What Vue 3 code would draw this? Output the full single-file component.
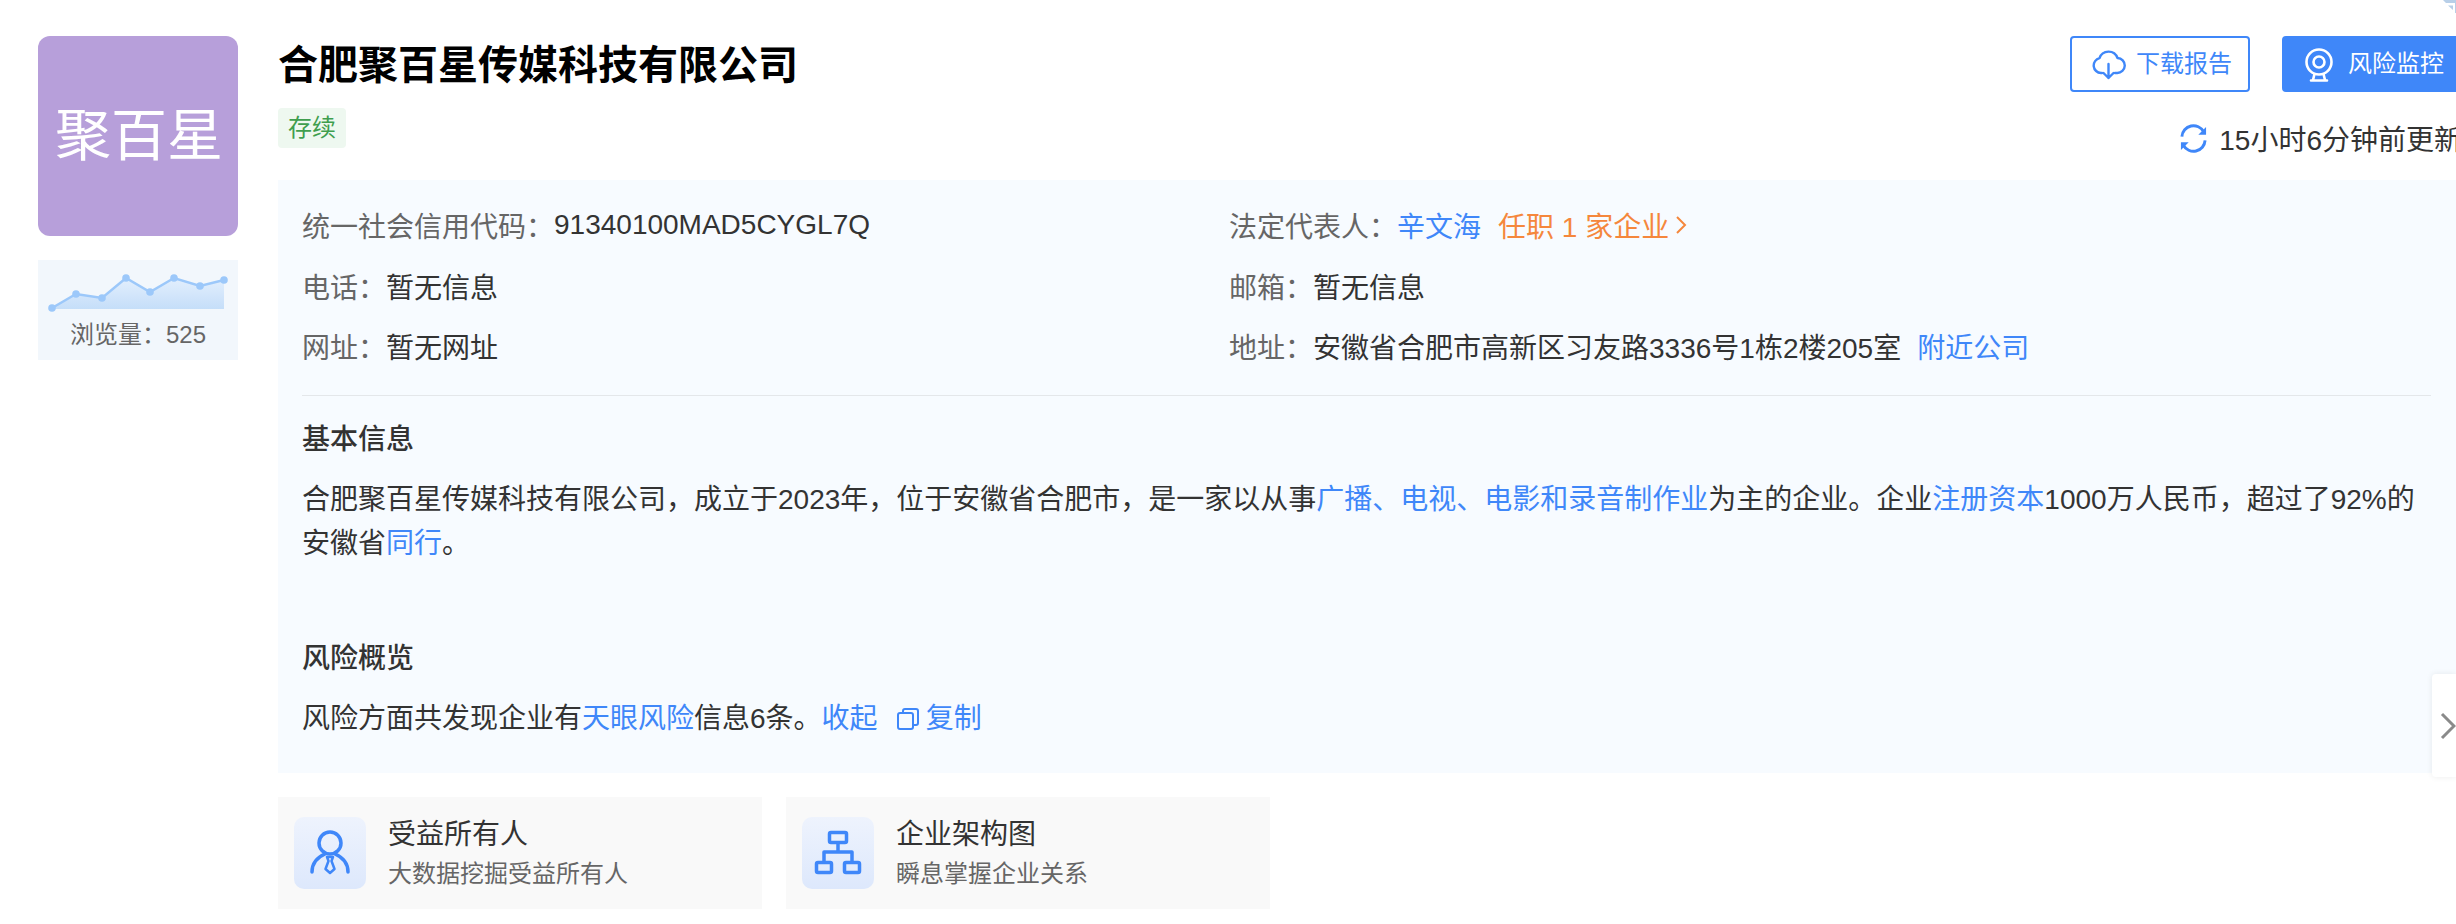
<template>
  <div class="page">
    <aside class="side">
      <div class="logo">聚百星</div>
      <div class="views">
        <svg class="spark" width="200" height="60" viewBox="0 0 200 60">
          <defs>
            <linearGradient id="sparkFill" x1="0" y1="0" x2="0" y2="1">
              <stop offset="0" stop-color="#e3effd" />
              <stop offset="1" stop-color="#c5def9" />
            </linearGradient>
          </defs>
          <polygon :points="areaPoints" fill="url(#sparkFill)" />
          <polyline :points="linePoints" fill="none" stroke="#9cc8fa" stroke-width="2.5" />
          <circle v-for="(p, i) in sparkData" :key="i" :cx="p[0]" :cy="p[1]" r="3.8" fill="#9cc8fa" />
        </svg>
        <div class="views-text">浏览量：525</div>
      </div>
    </aside>

    <main class="main">
      <header class="head">
        <div>
          <h1 class="title">合肥聚百星传媒科技有限公司</h1>
          <span class="tag">存续</span>
        </div>
        <div class="head-right">
          <div class="btns">
            <button class="btn btn-line">
              <svg width="34" height="32" viewBox="0 0 34 32" fill="none" stroke="#3f87f9" stroke-width="2.4" stroke-linecap="round" stroke-linejoin="round">
                <path d="M10 25H9a7.500 7.500 0 0 1-1.500-14.800A9.500 9.500 0 0 1 25.500 10a7.500 7.500 0 0 1-.5 15h-2" />
                <path d="M16.500 16v14M11.500 25l5 5 5-5" />
              </svg>
              <span>下载报告</span>
            </button>
            <button class="btn btn-fill">
              <svg width="30" height="36" viewBox="0 0 30 36" fill="none" stroke="#fff" stroke-width="2.600">
                <circle cx="15" cy="16" r="12.500" />
                <circle cx="15" cy="16" r="5.500" />
                <path d="M10.500 28l-1.500 6M19.500 28l1.500 6M7 34.500h16" stroke-linecap="round" />
              </svg>
              <span>风险监控</span>
            </button>
          </div>
          <div class="update">
            <svg width="29" height="29" viewBox="0 0 30 30" fill="none" stroke="#3f87f9" stroke-width="3">
              <path d="M3 13A12 12 0 0 1 25.500 8" />
              <path d="M27 17A12 12 0 0 1 4.500 22" />
              <path d="M28 3v8h-8z" fill="#3f87f9" stroke="none" />
              <path d="M2 27v-8h8z" fill="#3f87f9" stroke="none" />
            </svg>
            15小时6分钟前更新
          </div>
        </div>
      </header>

      <section class="panel">
        <div class="info-grid">
          <div class="cell"><span class="label">统一社会信用代码：</span>91340100MAD5CYGL7Q</div>
          <div class="cell">
            <span class="label">法定代表人：</span><span class="link">辛文海</span><span class="orange">任职 1 家企业<svg width="12" height="20" viewBox="0 0 12 20" fill="none" stroke="#f5873c" stroke-width="2"><path d="M2 2l8 8-8 8" /></svg></span>
          </div>
          <div class="cell"><span class="label">电话：</span>暂无信息</div>
          <div class="cell"><span class="label">邮箱：</span>暂无信息</div>
          <div class="cell"><span class="label">网址：</span>暂无网址</div>
          <div class="cell">
            <span class="label">地址：</span>安徽省合肥市高新区习友路3336号1栋2楼205室<span class="link near">附近公司</span>
          </div>
        </div>

        <div class="desc">
          <h2 class="desc-title">基本信息</h2>
          <p class="para">合肥聚百星传媒科技有限公司，成立于2023年，位于安徽省合肥市，是一家以从事<span class="link">广播、电视、电影和录音制作业</span>为主的企业。企业<span class="link">注册资本</span>1000万人民币，超过了92%的安徽省<span class="link">同行</span>。</p>
          <h2 class="desc-title risk-title">风险概览</h2>
          <p class="para">风险方面共发现企业有<span class="link">天眼风险</span>信息6条。<span class="link">收起</span><span class="link copy"><svg width="24" height="24" viewBox="0 0 24 24" fill="none" stroke="#3f87f9" stroke-width="2"><rect x="2" y="6" width="15" height="16" rx="2" /><path d="M7 6V4a2 2 0 0 1 2-2h11a2 2 0 0 1 2 2v12a2 2 0 0 1-2 2h-3" /></svg>复制</span></p>
        </div>
      </section>

      <div class="cards">
        <div class="card">
          <div class="card-icon">
            <svg width="72" height="72" viewBox="0 0 72 72" fill="none" stroke="#3f87f9" stroke-width="3.500" stroke-linecap="round" stroke-linejoin="round">
              <circle cx="36" cy="26" r="11" />
              <path d="M18 55c0-9 6-15 13-18M54 55c0-9-6-15-13-18" />
              <path d="M33 40h6l-1.500 4 3 8-4.500 4-4.500-4 3-8z" stroke-width="2.500" />
            </svg>
          </div>
          <div class="card-body">
            <div class="card-title">受益所有人</div>
            <div class="card-sub">大数据挖掘受益所有人</div>
          </div>
        </div>
        <div class="card">
          <div class="card-icon">
            <svg width="72" height="72" viewBox="0 0 72 72" fill="none" stroke="#3f87f9" stroke-width="3.500" stroke-linejoin="round">
              <rect x="27.500" y="15.500" width="17" height="10" rx="1.500" />
              <path d="M36 25v10M22 45V35h28v10" />
              <rect x="14.500" y="45.500" width="15" height="10" rx="1.500" />
              <rect x="42.500" y="45.500" width="15" height="10" rx="1.500" />
            </svg>
          </div>
          <div class="card-body">
            <div class="card-title">企业架构图</div>
            <div class="card-sub">瞬息掌握企业关系</div>
          </div>
        </div>
      </div>
    </main>

    <div class="side-tab">
      <svg width="16" height="28" viewBox="0 0 16 28" fill="none" stroke="#8a8a8a" stroke-width="3"><path d="M2 2l12 12L2 26" /></svg>
    </div>
    <svg class="corner" width="16" height="14" viewBox="0 0 16 14" fill="#b8cfe8">
      <path d="M3 0h13v13h-1V3H6z" />
      <path d="M8 5.500h5V10z" />
    </svg>
  </div>
</template>

<script setup>
import { computed } from 'vue'

const sparkData = [
  [14, 48], [38, 34], [64, 38], [88, 18], [112, 32], [136, 18], [162, 26], [186, 20]
]

const linePoints = computed(() => sparkData.map(p => p.join(',')).join(' '))
const areaPoints = computed(() => `14,49 ${linePoints.value} 186,49`)
</script>

<style>
html, body {
  margin: 0;
  background: #fff;
  overflow: hidden;
}
</style>

<style scoped>
.page {
  position: relative;
  display: flex;
  gap: 40px;
  width: 2456px;
  height: 924px;
  padding: 36px 0 0 38px;
  box-sizing: border-box;
  overflow: hidden;
  color: #333;
  font-family: "Liberation Sans", "Noto Sans CJK SC", sans-serif;
  font-size: 28px;
}

.side {
  flex: none;
  width: 200px;
}

.logo {
  height: 200px;
  padding-left: 2px;
  box-sizing: border-box;
  line-height: 200px;
  text-align: center;
  background: #b79fda;
  border-radius: 12px;
  color: #fff;
  font-size: 56px;
}

.views {
  height: 100px;
  margin-top: 24px;
  box-sizing: border-box;
  background: #f2f7fc;
}

.spark {
  display: block;
}

.views-text {
  color: #666;
  font-size: 24px;
  line-height: 30px;
  text-align: center;
}

.main {
  flex: none;
  width: 2200px;
}

.head {
  display: flex;
  justify-content: space-between;
  height: 144px;
}

.title {
  margin: 4px 0 18px;
  color: #000;
  font-size: 40px;
  font-weight: 700;
  line-height: 50px;
}

.tag {
  display: inline-block;
  padding: 0 10px;
  height: 40px;
  line-height: 40px;
  background: #eef8f0;
  border-radius: 4px;
  color: #3f9e4e;
  font-size: 24px;
}

.head-right {
  width: 408px;
  flex: none;
}

.btns {
  display: flex;
  gap: 32px;
}

.btn {
  display: flex;
  align-items: center;
  gap: 10px;
  width: 180px;
  height: 56px;
  padding: 0 0 0 20px;
  box-sizing: border-box;
  border: 2px solid #3f87f9;
  border-radius: 4px;
  background: #fff;
  color: #3f87f9;
  font-family: inherit;
  font-size: 24px;
}

.btn span {
  margin-top: -5px;
}

.btn-fill {
  gap: 14px;
  background: #3f87f9;
  color: #fff;
}

.update {
  display: flex;
  align-items: center;
  justify-content: flex-end;
  gap: 11px;
  margin: 28px 16px 0 0;
  height: 36px;
  white-space: nowrap;
}

.panel {
  height: 593px;
  padding: 0 47px 0 24px;
  box-sizing: border-box;
  background: #f7fbff;
}

.info-grid {
  display: grid;
  grid-template-columns: 927px 1fr;
  grid-auto-rows: 60.500px;
  padding: 15px 0 0;
  height: 216px;
  box-sizing: border-box;
  border-bottom: 1px solid #e4e7ea;
}

.cell {
  display: flex;
  align-items: center;
  white-space: pre;
}

.label {
  color: #666;
}

.link {
  color: #3f87f9;
}

.orange {
  display: flex;
  align-items: center;
  gap: 6px;
  margin-left: 17px;
  color: #f5873c;
}

.near {
  margin-left: 16px;
}

.desc-title {
  margin: 0;
  font-size: 28px;
  font-weight: 500;
  line-height: 40px;
}

.desc {
  padding-top: 24px;
}

.para {
  margin: 18px 0 0;
  line-height: 44px;
}

.risk-title {
  margin-top: 73px;
}

.copy {
  margin-left: 18px;
}

.copy svg {
  margin-right: 6px;
  vertical-align: -3px;
}

.cards {
  display: flex;
  gap: 24px;
  margin-top: 24px;
}

.card {
  display: flex;
  gap: 22px;
  width: 484px;
  height: 112px;
  padding: 20px 16px;
  box-sizing: border-box;
  background: #f9f9f9;
}

.card-icon {
  flex: none;
  width: 72px;
  height: 72px;
  border-radius: 10px;
  background: linear-gradient(#eef3fd, #dde8fc);
}

.card-icon svg {
  display: block;
}

.card-title {
  line-height: 38px;
}

.card-sub {
  margin-top: 2px;
  color: #666;
  font-size: 24px;
  line-height: 36px;
}

.card-body {
  margin-top: -1px;
}

.side-tab {
  position: absolute;
  top: 674px;
  right: 0;
  display: flex;
  align-items: center;
  justify-content: flex-end;
  width: 24px;
  height: 103px;
  background: #fff;
  border-radius: 4px 0 0 4px;
  box-shadow: 0 0 6px rgba(0, 0, 0, 0.08);
}

.corner {
  position: absolute;
  top: 0;
  right: 0;
}
</style>
